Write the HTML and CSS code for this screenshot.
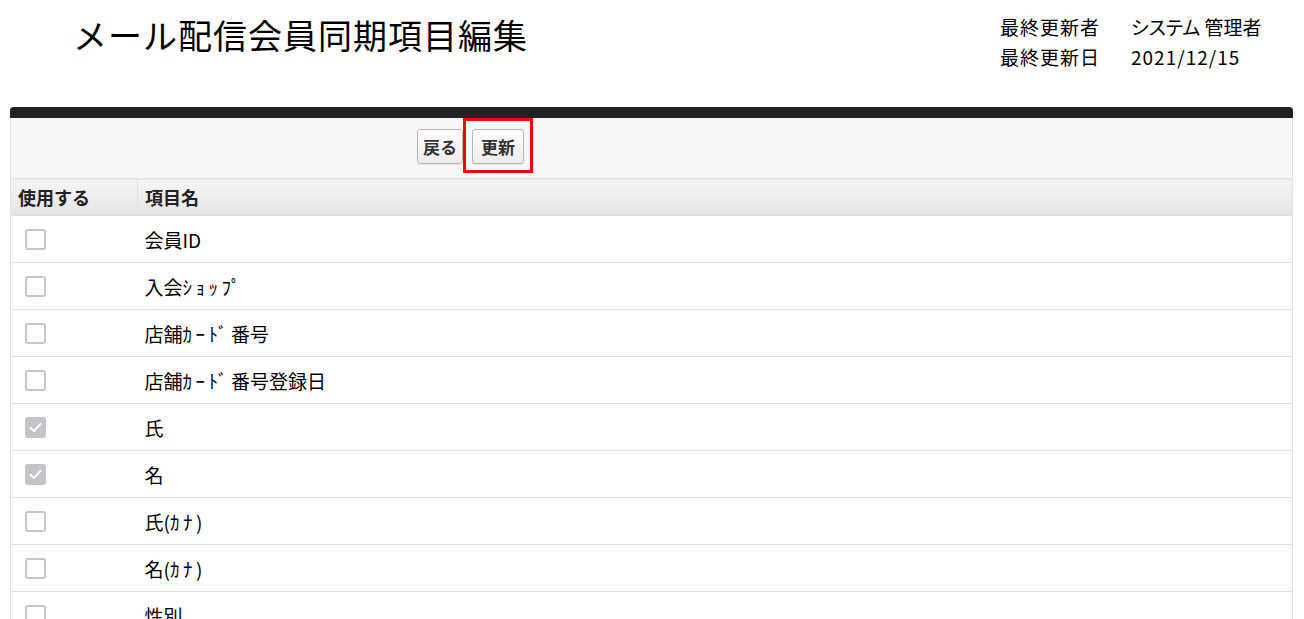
FILE: index.html
```html
<!DOCTYPE html>
<html lang="ja">
<head>
<meta charset="utf-8">
<title>メール配信会員同期項目編集</title>
<link rel="stylesheet" href="styles.css">
</head>
<body>
<div class="page">
  <header class="top">
    <h1 class="title">メール配信会員同期項目編集</h1>
    <dl class="meta">
      <div class="meta-row"><dt>最終更新者</dt><dd>システム 管理者</dd></div>
      <div class="meta-row"><dt>最終更新日</dt><dd class="date">2021/12/15</dd></div>
    </dl>
  </header>
  <section class="panel">
    <div class="panel-bar"></div>
    <div class="toolbar">
      <button class="btn">戻る</button>
      <span class="hl-wrap"><button class="btn btn-save">更新</button><span class="hl"></span></span>
    </div>
    <table class="grid">
      <thead>
        <tr><th class="c-use">使用する</th><th class="c-name">項目名</th></tr>
      </thead>
      <tbody>
        <tr><td class="c-use"><span class="cb"></span></td><td class="c-name">会員ID</td></tr>
        <tr><td class="c-use"><span class="cb"></span></td><td class="c-name">入会<span class="hw">ｼｮｯﾌﾟ</span></td></tr>
        <tr><td class="c-use"><span class="cb"></span></td><td class="c-name">店舗<span class="hw">ｶｰﾄﾞ</span>番号</td></tr>
        <tr><td class="c-use"><span class="cb"></span></td><td class="c-name">店舗<span class="hw">ｶｰﾄﾞ</span>番号登録日</td></tr>
        <tr><td class="c-use"><span class="cb on"><svg viewBox="0 0 21 21" width="21" height="21"><path d="M5.5 10.8 L9 14 L15.5 6.8" fill="none" stroke="#fff" stroke-width="2" stroke-linecap="round" stroke-linejoin="round"/></svg></span></td><td class="c-name">氏</td></tr>
        <tr><td class="c-use"><span class="cb on"><svg viewBox="0 0 21 21" width="21" height="21"><path d="M5.5 10.8 L9 14 L15.5 6.8" fill="none" stroke="#fff" stroke-width="2" stroke-linecap="round" stroke-linejoin="round"/></svg></span></td><td class="c-name">名</td></tr>
        <tr><td class="c-use"><span class="cb"></span></td><td class="c-name">氏(<span class="hw">ｶﾅ</span>)</td></tr>
        <tr><td class="c-use"><span class="cb"></span></td><td class="c-name">名(<span class="hw">ｶﾅ</span>)</td></tr>
        <tr><td class="c-use"><span class="cb"></span></td><td class="c-name">性別</td></tr>
        <tr><td class="c-use"><span class="cb"></span></td><td class="c-name">生年月日</td></tr>
      </tbody>
    </table>
  </section>
</div>
</body>
</html>
```
FILE: styles.css
```css
html, body {
  margin: 0;
  padding: 0;
  background: #fff;
}
body {
  font-family: "Noto Sans CJK JP", "Liberation Sans", sans-serif;
  color: #000;
}
.page {
  padding: 0 11px 0 10px;
}
.top {
  display: flex;
  justify-content: space-between;
  align-items: flex-start;
  height: 107px;
}
.title {
  margin: 12px 0 0 63px;
  font-size: 34px;
  font-weight: 400;
  line-height: 46px;
  letter-spacing: 1px;
}
.meta {
  margin: 12px 30px 0 0;
  font-size: 19px;
  line-height: 30px;
}
.meta-row {
  display: flex;
}
.meta dt {
  width: 131px;
  letter-spacing: 1px;
}
.meta dd {
  margin: 0;
  width: 132px;
  font-feature-settings: "palt";
}
.meta dd.date {
  letter-spacing: 1px;
}
.panel {
  border-left: 1px solid #e0e3e5;
  border-right: 1px solid #e0e3e5;
}
.panel-bar {
  height: 11px;
  background: #222;
  border-radius: 4px 4px 0 0;
  margin: 0 -1px;
}
.toolbar {
  height: 60px;
  background: #f7f7f7;
  display: flex;
  align-items: center;
  padding-left: 406px;
  gap: 9px;
  box-sizing: border-box;
  padding-bottom: 4px;
}
.btn {
  font-family: "Noto Sans CJK JP", "Liberation Sans", sans-serif;
  font-size: 17px;
  font-weight: 700;
  color: #333;
  height: 35px;
  padding: 0 5px;
  border: 1px solid #b5b5b5;
  border-radius: 3px;
  background: linear-gradient(#fff, #ececec);
  box-shadow: 0 1px 0 rgba(0,0,0,0.08);
  line-height: 33px;
}
.btn-save {
  padding: 0 8px;
}
.hl-wrap {
  position: relative;
  display: inline-flex;
}
.hl {
  position: absolute;
  left: -9px;
  right: -9px;
  top: -11px;
  bottom: -9px;
  border: 3px solid #f00;
  pointer-events: none;
}
.grid {
  width: 100%;
  border-collapse: collapse;
  table-layout: fixed;
}
.grid th {
  height: 36px;
  padding: 0;
  text-align: left;
  font-size: 18px;
  font-weight: 700;
  color: #222;
  background: linear-gradient(#f5f5f5, #e4e4e4);
  border-top: 1px solid #dde3e6;
  border-bottom: 1px solid #d6dde0;
}
.grid th.c-use {
  width: 119px;
  padding-left: 7px;
  border-right: 1px solid #dde2e5;
}
.grid th.c-name {
  padding-left: 7px;
}
.grid td {
  height: 46px;
  padding: 0;
  border-bottom: 1px solid #dfe3e5;
  font-size: 19px;
}
.grid td.c-use {
  padding-left: 14px;
}
.grid td.c-name {
  padding-left: 7px;
}
.hw {
  letter-spacing: 3.5px;
}
.cb {
  display: block;
  width: 21px;
  height: 21px;
  box-sizing: border-box;
  border: 2px solid #c6c6cc;
  border-radius: 3px;
  background: #fff;
}
.cb.on {
  background: #c3c3c8;
  border-color: #c3c3c8;
  position: relative;
}
.cb.on svg {
  position: absolute;
  left: -2px;
  top: -2px;
}
```
